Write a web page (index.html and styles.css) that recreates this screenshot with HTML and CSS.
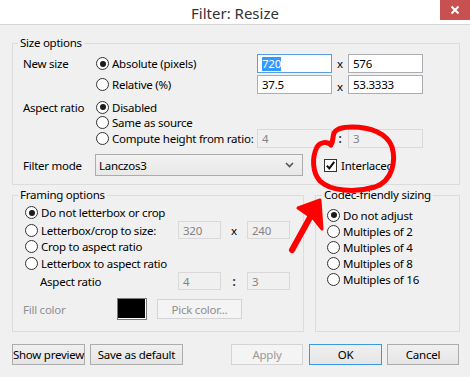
FILE: index.html
```html
<!DOCTYPE html>
<html>
<head>
<meta charset="utf-8">
<link rel="stylesheet" href="styles.css">
</head>
<body>
<div class="titlebar">
  <div></div>
  <div class="title">Filter: Resize</div>
  <div class="close"><svg width="10" height="10" viewBox="0 0 10 10"><path d="M1.5 1.5 L8.5 8.5 M8.5 1.5 L1.5 8.5" stroke="#fff" stroke-width="2"/></svg></div>
</div>

<div class="dialog">
  <fieldset class="group size-group">
    <legend>Size options</legend>
    <div class="srow r1">
      <span class="lbl">New size</span>
      <span class="opt"><span class="radio on"></span>Absolute (pixels)</span>
      <span class="tb focus"><span class="sel">720</span></span>
      <span class="sep">x</span>
      <span class="tb">576</span>
    </div>
    <div class="srow r2">
      <span></span>
      <span class="opt"><span class="radio"></span>Relative (%)</span>
      <span class="tb">37.5</span>
      <span class="sep low">x</span>
      <span class="tb">53.3333</span>
    </div>
    <div class="srow r3">
      <span class="lbl">Aspect ratio</span>
      <span class="opt"><span class="radio on"></span>Disabled</span>
    </div>
    <div class="srow r4">
      <span></span>
      <span class="opt"><span class="radio"></span>Same as source</span>
    </div>
    <div class="srow r5">
      <span></span>
      <span class="opt"><span class="radio"></span>Compute height from ratio:</span>
      <span class="tb dis">4</span>
      <span class="sep colon">:</span>
      <span class="tb dis">3</span>
    </div>
    <div class="frow">
      <span class="lbl">Filter mode</span>
      <span class="combo">Lanczos3<svg class="chev" width="9" height="6" viewBox="0 0 9 6"><path d="M1 1 L4.5 4.5 L8 1" fill="none" stroke="#555" stroke-width="1.6"/></svg></span>
      <span class="check"><span class="cbox"><svg width="11" height="11" viewBox="0 0 11 11"><path d="M1.8 5.6 L4.3 8.4 L9.2 1.8" fill="none" stroke="#111" stroke-width="2"/></svg></span>Interlaced</span>
    </div>
  </fieldset>

  <div class="lower">
    <fieldset class="group framing">
      <legend>Framing options</legend>
      <div class="grow">
        <span class="opt"><span class="radio on"></span>Do not letterbox or crop</span>
      </div>
      <div class="grow">
        <span class="opt"><span class="radio"></span>Letterbox/crop to size:</span>
        <span class="tb sm dis">320</span>
        <span class="sep">x</span>
        <span class="tb sm dis">240</span>
      </div>
      <div class="grow">
        <span class="opt"><span class="radio"></span>Crop to aspect ratio</span>
      </div>
      <div class="grow">
        <span class="opt"><span class="radio"></span>Letterbox to aspect ratio</span>
      </div>
      <div class="grow">
        <span class="lbl indent">Aspect ratio</span>
        <span class="tb sm dis">4</span>
        <span class="sep colon">:</span>
        <span class="tb sm dis">3</span>
      </div>
      <div class="fill">
        <span class="lbl disabled">Fill color</span>
        <span class="swatch"></span>
        <span class="btn pick">Pick color...</span>
      </div>
    </fieldset>

    <fieldset class="group codec">
      <legend>Codec-friendly sizing</legend>
      <div class="crow"><span class="opt"><span class="radio on"></span>Do not adjust</span></div>
      <div class="crow"><span class="opt"><span class="radio"></span>Multiples of 2</span></div>
      <div class="crow"><span class="opt"><span class="radio"></span>Multiples of 4</span></div>
      <div class="crow"><span class="opt"><span class="radio"></span>Multiples of 8</span></div>
      <div class="crow"><span class="opt"><span class="radio"></span>Multiples of 16</span></div>
    </fieldset>
  </div>

  <div class="buttons">
    <span class="btn w73">Show preview</span>
    <span class="btn w93">Save as default</span>
    <span class="spacer"></span>
    <span class="btn w72 disabled-btn">Apply</span>
    <span class="btn w73 default">OK</span>
    <span class="btn w72">Cancel</span>
  </div>
</div>

<svg class="annot" width="470" height="377" viewBox="0 0 470 377">
  <path d="M331 145 C327 141 320 142 317 147 C312 157 312 172 320 181 C330 191 355 193 375 187 C393 181 396 160 392 147 C387 133 370 127 352 127 C343 127 336 129 334 133 C333 136 333 139 332 143" fill="none" stroke="#f00" stroke-width="5" stroke-linecap="round" stroke-linejoin="round"/>
  <path d="M292 250 L313 212" fill="none" stroke="#f00" stroke-width="6" stroke-linecap="round"/>
  <path d="M298 208 L320 200 L322 229 L314 219 Z" fill="#f00" stroke="#f00" stroke-width="3" stroke-linejoin="round"/>
</svg>
</body>
</html>
```

FILE: styles.css
```css
* { box-sizing: border-box; }
html, body { margin: 0; padding: 0; }
body {
  width: 470px;
  height: 377px;
  overflow: hidden;
  position: relative;
  background: #f0f0f0;
  font-family: "Noto Sans", sans-serif;
  font-size: 11.5px;
  letter-spacing: -0.25px;
  color: #000;
}
.titlebar {
  height: 25px;
  background: #fff;
  border-bottom: 1px solid #d6d6d6;
  display: grid;
  grid-template-columns: 1fr auto 1fr;
  align-items: start;
}
.title {
  font-size: 15px;
  letter-spacing: 0;
  color: #333;
  line-height: 24px;
  padding-top: 1px;
}
.close {
  justify-self: end;
  width: 30px;
  height: 20px;
  background: #c75050;
  display: flex;
  align-items: center;
  justify-content: center;
}
.dialog {
  padding: 0 10px 0 12px;
}
.group {
  margin: 0;
  border: 1px solid #dcdcdc;
  min-width: 0;
}
.group legend {
  padding: 0 2px;
  line-height: 16px;
}
.size-group {
  margin-top: 10px;
  padding: 3px 0 8px 10px;
}
.size-group legend { margin-left: -5px; }

.srow {
  display: grid;
  grid-template-columns: 73px 161px 75px 16px 75px;
  align-items: center;
}
.r1, .r2, .r5 { height: 19px; }
.r2 { margin-top: 2px; }
.r3 { height: 16px; margin-top: 5px; }
.r4 { height: 14px; }

.lbl { white-space: nowrap; }
.lbl.indent { padding-left: 15px; }
.lbl.disabled { color: #8f8f8f; }

.opt {
  display: flex;
  align-items: center;
  gap: 3px;
  white-space: nowrap;
}
.radio {
  width: 13px;
  height: 13px;
  flex: none;
  border: 1px solid #333;
  border-radius: 50%;
  background: #fff;
  display: flex;
  align-items: center;
  justify-content: center;
}
.radio.on::after {
  content: "";
  width: 6px;
  height: 6px;
  border-radius: 50%;
  background: #1c1c1c;
}

.tb {
  height: 19px;
  border: 1px solid #abadb3;
  background: #fff;
  padding: 0 4px;
  display: flex;
  align-items: center;
  white-space: nowrap;
}
.tb.sm { height: 18px; }
.tb.focus { border-color: #569de5; }
.tb.dis {
  background: #f0f0f0;
  border-color: #d9d9d9;
  color: #838383;
}
.sel {
  background: #3399ff;
  color: #fff;
  line-height: 14px;
}
.sep {
  text-align: center;
}
.sep.low { padding-top: 3px; }
.sep.colon { font-weight: bold; color: #333; }

.frow {
  margin-top: 6px;
  display: grid;
  grid-template-columns: 72px 208px auto;
  align-items: center;
}
.combo {
  height: 22px;
  border: 1px solid #acacac;
  background: linear-gradient(#f2f2f2, #e8e8e8);
  padding: 0 8px 0 3px;
  display: flex;
  align-items: center;
  justify-content: space-between;
}
.check {
  margin-left: 21px;
  display: flex;
  align-items: center;
  gap: 4px;
}
.cbox {
  width: 13px;
  height: 13px;
  border: 1px solid #333;
  background: #fff;
  display: flex;
  align-items: center;
  justify-content: center;
}

.lower {
  margin-top: 2px;
  display: flex;
  gap: 11px;
}
.framing {
  width: 292px;
  padding: 1px 0 11px 12px;
}
.framing legend { margin-left: -7px; }
.codec {
  flex: 1;
  padding: 4px 0 0 11px;
}
.codec legend { margin-left: -5px; }

.grow {
  height: 17px;
  display: grid;
  grid-template-columns: 153px 43px 26px 43px;
  align-items: center;
}
.crow {
  height: 16px;
  display: flex;
  align-items: center;
}
.fill {
  margin-top: 9px;
  margin-left: -2px;
  display: grid;
  grid-template-columns: 84px 30px 85px;
  column-gap: 10px;
  align-items: center;
}
.swatch {
  height: 22px;
  background: #000;
  border: 1px solid #7a7a7a;
  box-shadow: inset -1px -1px 0 #fff;
}

.btn {
  height: 21px;
  border: 1px solid #acacac;
  background: linear-gradient(#f0f0f0, #e5e5e5);
  display: flex;
  align-items: center;
  justify-content: center;
  white-space: nowrap;
}
.btn.pick {
  height: 20px;
  color: #8f8f8f;
  border-color: #d4d4d4;
  background: #f4f4f4;
}
.buttons {
  margin-top: 12px;
  display: flex;
  padding-right: 1px;
}
.w73 { width: 73px; }
.w93 { width: 93px; margin-left: 5px; }
.w72 { width: 72px; }
.spacer { flex: 1; }
.disabled-btn {
  color: #9a9a9a;
  border-color: #d4d4d4;
  background: #f4f4f4;
}
.default {
  border-color: #3c98e0;
  margin: 0 5px 0 6px;
}

.annot {
  position: absolute;
  left: 0;
  top: 0;
  pointer-events: none;
}
```
